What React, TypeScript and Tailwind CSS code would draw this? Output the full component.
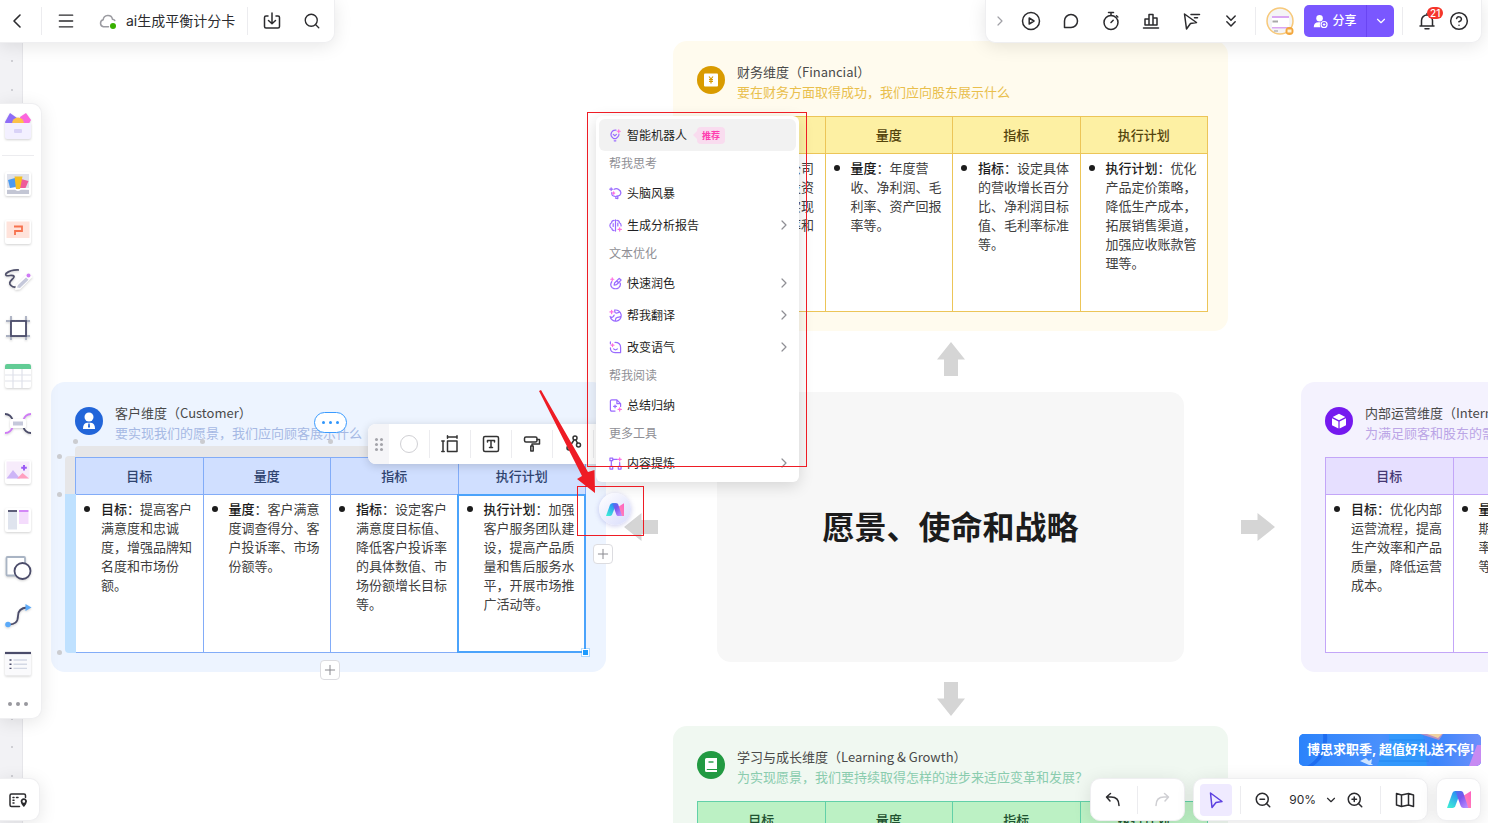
import React from "react";
import {
  ChevronDown,
  ChevronLeft,
  ChevronRight,
  ChevronsDown,
  CircleHelp,
  Menu,
  Plus,
  Search,
  ZoomIn,
  ZoomOut,
} from "lucide-react";

type IconProps = { children: React.ReactNode; className?: string; box?: string };

function Line({ children, className = "size-5", box = "0 0 20 20" }: IconProps) {
  return (
    <svg
      viewBox={box}
      className={className}
      fill="none"
      stroke="currentColor"
      strokeWidth="1.5"
      strokeLinecap="round"
      strokeLinejoin="round"
      aria-hidden="true"
    >
      {children}
    </svg>
  );
}

function AiLogo({ id, className }: { id: string; className: string }) {
  return (
    <svg viewBox="0 0 24 17" className={className} aria-hidden="true">
      <defs>
        <linearGradient id={id + "a"} x1="0" y1="1" x2="0.6" y2="0">
          <stop offset="0" stopColor="#3ff5d4" />
          <stop offset="1" stopColor="#2a8cf5" />
        </linearGradient>
        <linearGradient id={id + "b"} x1="0" y1="0" x2="0.8" y2="1">
          <stop offset="0" stopColor="#3b7df0" />
          <stop offset="0.45" stopColor="#7b55ee" />
          <stop offset="1" stopColor="#b98aff" />
        </linearGradient>
        <linearGradient id={id + "c"} x1="1" y1="0" x2="0" y2="1">
          <stop offset="0" stopColor="#ff5fc0" />
          <stop offset="1" stopColor="#ff8fb4" />
        </linearGradient>
      </defs>
      <path d="M16 5 L24 0 V17 H21 Z" fill={`url(#${id}c)`} />
      <path d="M0 17 L5.4 2 Q6.2 0 8.2 0 H14 L8.2 15.2 Q7.5 17 5.5 17 Z" fill={`url(#${id}a)`} />
      <path d="M8.4 0 H14 Q15.6 0 16.2 1.6 L21.4 17 H16.5 Q14.4 17 13.7 15 L10.6 6.2 Z" fill={`url(#${id}b)`} />
    </svg>
  );
}

/* ---------- canvas cards ---------- */

type Cell = { label: string; text: string };
type Tone = {
  card: string;
  badge: string;
  sub: string;
  border: string;
  head: string;
};

function DimensionCard({
  place,
  tone,
  icon,
  title,
  subtitle,
  cells,
}: {
  place: string;
  tone: Tone;
  icon: React.ReactNode;
  title: string;
  subtitle: string;
  cells: Cell[];
}) {
  return (
    <section className={`absolute w-[555px] rounded-[14px] px-6 pb-[19px] ${place} ${tone.card}`}>
      <div className="flex h-[75px] items-start gap-3 pt-[21px]">
        <span className={`mt-1 grid size-7 shrink-0 place-items-center rounded-full ${tone.badge}`}>{icon}</span>
        <div className="whitespace-nowrap text-[13px] leading-5">
          <h2 className="text-[#4a4a4a]">{title}</h2>
          <p className={tone.sub}>{subtitle}</p>
        </div>
      </div>
      <table className={`w-[511px] table-fixed border-collapse border ${tone.border}`}>
        <thead>
          <tr className="h-[37px]">
            {cells.map((c) => (
              <th key={c.label} className={`border p-0 text-[13px] leading-5 font-medium ${tone.border} ${tone.head}`}>
                {c.label}
              </th>
            ))}
          </tr>
        </thead>
        <tbody>
          <tr className="h-[158px]">
            {cells.map((c) => (
              <td
                key={c.label}
                className={`border bg-white py-1 pr-2 pl-[25px] align-top text-[13px] leading-[19px] text-[#404040] ${tone.border}`}
              >
                <div className="relative">
                  <span className="absolute top-[7px] -left-[17px] size-[6px] rounded-full bg-[#1c1c1c]" />
                  <b className="font-medium text-[#1c1c1c]">{c.label}</b>：{c.text}
                </div>
              </td>
            ))}
          </tr>
        </tbody>
      </table>
    </section>
  );
}

const financial: Cell[] = [
  { label: "目标", text: "提高公司盈利能力与投资收益率、并实现持续的增长率和股东价值。" },
  { label: "量度", text: "年度营收、净利润、毛利率、资产回报率等。" },
  { label: "指标", text: "设定具体的营收增长百分比、净利润目标值、毛利率标准等。" },
  { label: "执行计划", text: "优化产品定价策略，降低生产成本，拓展销售渠道，加强应收账款管理等。" },
];
const customer: Cell[] = [
  { label: "目标", text: "提高客户满意度和忠诚度，增强品牌知名度和市场份额。" },
  { label: "量度", text: "客户满意度调查得分、客户投诉率、市场份额等。" },
  { label: "指标", text: "设定客户满意度目标值、降低客户投诉率的具体数值、市场份额增长目标等。" },
  { label: "执行计划", text: "加强客户服务团队建设，提高产品质量和售后服务水平，开展市场推广活动等。" },
];
const internal: Cell[] = [
  { label: "目标", text: "优化内部运营流程，提高生产效率和产品质量，降低运营成本。" },
  { label: "量度", text: "生产周期、产品合格率、运营效率等。" },
  { label: "指标", text: "设定生产周期缩短目标。" },
  { label: "执行计划", text: "引入精益管理。" },
];
const learning: Cell[] = [
  { label: "目标", text: "提升员工能力。" },
  { label: "量度", text: "员工培训时长。" },
  { label: "指标", text: "设定培训目标。" },
  { label: "执行计划", text: "制定培训计划。" },
];

function BlockArrow({ place, turn }: { place: string; turn: string }) {
  return (
    <svg viewBox="0 0 36 36" className={`absolute size-9 ${place} ${turn}`} aria-hidden="true">
      <path d="M18 1 L32 18.500 H25 V35 H11 V18.500 H4 Z" fill="#d5d5d5" />
    </svg>
  );
}

const marks = [
  "left-[308px] top-[49px]",
  "left-[831px] top-[49px]",
  "left-[1354px] top-[49px]",
  "left-[50px] top-[327px]",
  "left-[573px] top-[327px]",
  "left-[1096px] top-[327px]",
  "left-[308px] top-[576px]",
  "left-[831px] top-[576px]",
  "left-[1354px] top-[576px]",
  "left-[50px] top-[854px]",
  "left-[573px] top-[854px]",
  "left-[1096px] top-[854px]",
];

function Watermark() {
  return (
    <div className="pointer-events-none absolute inset-0 z-30 overflow-hidden" aria-hidden="true">
      {marks.map((m) => (
        <div
          key={m}
          className={`absolute -translate-x-1/2 -translate-y-1/2 -rotate-[47deg] text-center font-['Liberation_Serif','Noto_Sans_CJK_SC',serif] text-[30px] leading-8 whitespace-nowrap text-black/[0.015] ${m}`}
        >
          linfy
          <br />
          10.10.23.22
          <br />
          博思
          <br />
          2025/05/15 16:57
        </div>
      ))}
    </div>
  );
}

/* ---------- AI menu ---------- */

const V = "#9a6bff";
const P = "#ff6fe0";

function Glyph({ children }: { children: React.ReactNode }) {
  return (
    <svg
      viewBox="0 0 14 14"
      className="size-[13px] shrink-0"
      fill="none"
      stroke={V}
      strokeWidth="1.3"
      strokeLinecap="round"
      strokeLinejoin="round"
      aria-hidden="true"
    >
      {children}
    </svg>
  );
}

const star = <path d="M11.500 9.500 V13 M9.800 11.200 H13.300" stroke={P} />;

type Row = { kind: "label"; text: string } | { kind: "item"; text: string; icon: React.ReactNode; more?: boolean; hot?: boolean };

const rows: Row[] = [
  {
    kind: "item",
    text: "智能机器人",
    hot: true,
    icon: (
      <Glyph>
        <path d="M7.500 1.200 A4.600 4.600 0 0 0 3.200 8.600 L5 10.300 H7.600 L9.600 8.400 Q10.800 7.200 10.700 5.500 M5.600 12.700 H7.400" />
        <path d="M4.600 5.800 L6.300 7.300 L8 5.800" />
        <path d="M10.500 0.800 V4 M8.900 2.400 H12.100" stroke={P} />
      </Glyph>
    ),
  },
  { kind: "label", text: "帮我思考" },
  {
    kind: "item",
    text: "头脑风暴",
    icon: (
      <Glyph>
        <path d="M5.500 2.500 Q8 1 10.500 2.800 Q13.500 4.500 12.500 7.500 Q12 9.800 9.500 9.500 Q7.500 9.500 7.300 11 M9.500 9.500 V12.500 L7 12 M3 6 Q2.500 10 6.500 10" />
        <path d="M2.300 0.800 V3.800 M0.800 2.300 H3.800" />
        <path d="M5 5.300 V7.700 M3.800 6.500 H6.200" stroke={P} />
      </Glyph>
    ),
  },
  {
    kind: "item",
    text: "生成分析报告",
    more: true,
    icon: (
      <Glyph>
        <path d="M7 1 V13 M5.500 1.500 Q3 1.500 2.800 4 Q0.700 5 1 7.500 Q1.200 9.500 3 10 Q3.200 12.500 5.500 12.500 M8.500 1.500 Q11 1.500 11.200 4 Q13.300 5 13 7.500 M9.500 4.500 V7.500 M4.500 5 V8" />
        {star}
      </Glyph>
    ),
  },
  { kind: "label", text: "文本优化" },
  {
    kind: "item",
    text: "快速润色",
    more: true,
    icon: (
      <Glyph>
        <path d="M5.500 8.800 L6 6.500 L11 1.500 L13 3.300 L8 8.300 Z M8.500 4.500 L10.500 6.200 M3 5 Q0.500 9 3.500 11.500 Q7 13.800 10.500 11.500 Q13 9 12 6.500" />
        <path d="M3.500 0.800 V4 M1.900 2.400 H5.100" stroke={P} />
      </Glyph>
    ),
  },
  {
    kind: "item",
    text: "帮我翻译",
    more: true,
    icon: (
      <Glyph>
        <path d="M6 1.200 A6 6 0 1 1 1.200 8 M6.500 1.200 Q5.500 4 8 4.500 Q11 4 11.500 3 M1.500 9 Q5 9 5.500 6.500 M7 12.800 Q6.500 9.500 9 9 Q11 9 12.500 8" />
        <path d="M2.800 1.500 V5 M1 3.200 H4.500" stroke={P} />
      </Glyph>
    ),
  },
  {
    kind: "item",
    text: "改变语气",
    more: true,
    icon: (
      <Glyph>
        <path d="M6.500 1.500 Q12.500 1.500 12.500 7 V12.500 H6.500 Q1.500 12.500 1.500 7.500 M5 8.500 Q7 10.500 9 8.500 M1.500 1 V3" />
        <path d="M3.800 3 V6 M2.300 4.500 H5.300" stroke={P} />
      </Glyph>
    ),
  },
  { kind: "label", text: "帮我阅读" },
  {
    kind: "item",
    text: "总结归纳",
    icon: (
      <Glyph>
        <path d="M6.500 13 H3 Q1.500 13 1.500 11.500 V2.500 Q1.500 1 3 1 H8.500 L12.500 5 V8 M8.500 1 V5 H12.500 M6.500 6.500 V9.500 M5 8 H8" />
        {star}
      </Glyph>
    ),
  },
  { kind: "label", text: "更多工具" },
  {
    kind: "item",
    text: "内容提炼",
    more: true,
    icon: (
      <Glyph>
        <path d="M1 1.200 H4 V4 H1 Z M2.500 4 V10 M1 10.200 H4 V13 H1 Z M4 2.500 H9 M11.500 6 V10 M10 10.200 H13 V13 H10 Z" />
        <path d="M11.500 0.800 V4.200 M9.800 2.500 H13.200" stroke={P} />
      </Glyph>
    ),
  },
];

function AiMenu() {
  return (
    <div
      role="menu"
      className="absolute top-[116px] left-[596px] w-[203px] rounded-md bg-white p-[3px] text-xs shadow-[0_4px_16px_rgba(0,0,0,0.14)]"
    >
      {rows.map((r) =>
        r.kind === "label" ? (
          <div key={r.text} className="flex h-[26px] items-center px-[10px] pb-[2px] text-[#8f8f95]">
            {r.text}
          </div>
        ) : (
          <button
            key={r.text}
            role="menuitem"
            className={`flex h-8 w-full items-center gap-[5px] rounded-md pr-1 pl-[10px] text-[#1f1f24] ${r.hot ? "bg-[#f2f2f2]" : ""}`}
          >
            {r.icon}
            <span>{r.text}</span>
            {r.hot && (
              <span className="ml-px flex items-center">
                <span className="size-0 border-y-4 border-r-4 border-y-transparent border-r-[#f9dcef]" />
                <span className="rounded bg-[#f9dcef] px-[5px] text-[9px] leading-[17px] font-bold text-[#ff3db0]">推荐</span>
              </span>
            )}
            {r.more && <ChevronRight className="ml-auto size-4 text-[#8f8f95]" strokeWidth={1.8} />}
          </button>
        ),
      )}
    </div>
  );
}

/* ---------- selection tools ---------- */

function SelectionToolbar() {
  const tools: [string, React.ReactNode][] = [
    ["填充颜色", <span className="size-[18px] rounded-full border border-[#d0d0d4] bg-white" />],
    [
      "单元格尺寸",
      <Line>
        <path d="M7.500 7 H17 V17.500 H7.500 Z M7.500 3 H17 M7.500 1.800 V4.200 M17 1.800 V4.200 M3 7 V17.500 M1.800 7 H4.200 M1.800 17.500 H4.200" />
      </Line>,
    ],
    [
      "文本",
      <Line>
        <rect x="2.500" y="2.500" width="15" height="15" rx="1.500" />
        <path d="M6.500 8 V6.500 H13.500 V8 M10 6.500 V13.500 M8.500 13.500 H11.500" />
      </Line>,
    ],
    [
      "格式刷",
      <Line>
        <rect x="2.500" y="3" width="12.500" height="5" rx="1.500" />
        <path d="M15 5.500 H17.500 V10 H10 V12 M8.800 12 H11.200 V17 H8.800 Z" />
      </Line>,
    ],
    [
      "关联",
      <Line>
        <circle cx="12" cy="4" r="2" />
        <circle cx="6" cy="14" r="2" />
        <circle cx="15.500" cy="11" r="2" />
        <path d="M11 6 L7 12 M12.800 5.800 L14.500 9.200" />
      </Line>,
    ],
    ["更多", null],
  ];
  return (
    <div className="absolute top-[424px] left-[368px] flex h-10 overflow-hidden rounded-lg bg-white text-[#333] shadow-[0_2px_10px_rgba(0,0,0,0.16)]">
      <div className="grid w-[21px] place-items-center bg-[#f5f5f8]">
        <div className="grid w-2 grid-cols-2 gap-x-[2px] gap-y-[2px]">
          {[0, 1, 2, 3, 4, 5].map((i) => (
            <span key={i} className="size-[3px] rounded-full bg-[#a4a4aa]" />
          ))}
        </div>
      </div>
      {tools.map(([name, icon]) => (
        <button key={name} aria-label={name} className="my-[6px] grid w-[41px] place-items-center border-r border-[#ececef]">
          {icon}
        </button>
      ))}
    </div>
  );
}

function AddButton({ place, label }: { place: string; label: string }) {
  return (
    <button
      aria-label={label}
      className={`absolute grid size-5 place-items-center rounded border border-[#dcdce0] bg-white text-[#8a8a90] ${place}`}
    >
      <Plus className="size-4" strokeWidth={1.5} />
    </button>
  );
}

const handles = [
  "left-[73px] top-[439px]",
  "left-[200px] top-[439px]",
  "left-[328px] top-[439px]",
  "left-[57px] top-[454px]",
  "left-[57px] top-[492px]",
  "left-[57px] top-[650px]",
];

function Canvas() {
  return (
    <main className="absolute inset-0 overflow-hidden">
      <div className="absolute inset-y-0 left-0 flex w-[23px] flex-col items-center justify-between border-r border-[#e6e6ea] bg-[#f2f2f5] pt-[3px] pb-[17px] pl-[2px]">
        {Array.from({ length: 29 }, (_, i) => (
          <span key={i} className="size-[2px] bg-[#cfcfd4]" />
        ))}
      </div>

      <DimensionCard
        place="left-[673px] top-[41px]"
        tone={{
          card: "bg-[#fffbee]",
          badge: "bg-[#d99b00]",
          sub: "text-[#e9bf4d]",
          border: "border-[#ecc558]",
          head: "bg-[#fdf0a3] text-[#54440c]",
        }}
        icon={
          <svg viewBox="0 0 14 14" className="size-[14px]" aria-hidden="true">
            <rect x="0" y="0.500" width="14" height="13" rx="1" fill="#fff" />
            <path d="M5 3.500 L7 6 L9 3.500 M7 6 V10.500 M5 6.600 H9 M5 8.500 H9" stroke="#d99b00" strokeWidth="1.200" fill="none" />
          </svg>
        }
        title="财务维度（Financial）"
        subtitle="要在财务方面取得成功，我们应向股东展示什么"
        cells={financial}
      />
      <DimensionCard
        place="left-[51px] top-[382px]"
        tone={{
          card: "bg-[#edf4ff]",
          badge: "bg-[#2265d9]",
          sub: "text-[#a6b9e4]",
          border: "border-[#82acf8]",
          head: "bg-[#d0dfff] text-[#2f4470]",
        }}
        icon={
          <svg viewBox="0 0 14 18" className="h-[18px] w-[14px]" aria-hidden="true">
            <circle cx="7" cy="5" r="4.500" fill="#fff" />
            <path d="M1 17 Q1 11 5 10.800 H9 Q13 11 13 17 Z" fill="#fff" />
            <path d="M6.300 11.500 H7.700 L8 15 L7 16 L6 15 Z" fill="#2265d9" />
          </svg>
        }
        title="客户维度（Customer）"
        subtitle="要实现我们的愿景，我们应向顾客展示什么"
        cells={customer}
      />
      <DimensionCard
        place="left-[1301px] top-[382px]"
        tone={{
          card: "bg-[#f4f2fe]",
          badge: "bg-[#7519ef]",
          sub: "text-[#bba5e6]",
          border: "border-[#c3a6f8]",
          head: "bg-[#e6dfff] text-[#453873]",
        }}
        icon={
          <svg viewBox="0 0 16 16" className="size-4" aria-hidden="true">
            <path d="M8 0.800 L14.300 4 L8 7.200 L1.700 4 Z M1 5.200 L7.400 8.400 V15.400 L1 12.300 Z M15 5.200 L8.600 8.400 V15.400 L15 12.300 Z" fill="#fff" />
          </svg>
        }
        title="内部运营维度（Internal Process）"
        subtitle="为满足顾客和股东的需求，我们应该擅长什么"
        cells={internal}
      />
      <DimensionCard
        place="left-[673px] top-[726px]"
        tone={{
          card: "bg-[#f0f8f1]",
          badge: "bg-[#229a42]",
          sub: "text-[#8accae]",
          border: "border-[#62d0a8]",
          head: "bg-[#bcf1c4] text-[#1f5231]",
        }}
        icon={
          <svg viewBox="0 0 14 16" className="h-4 w-[14px]" aria-hidden="true">
            <path d="M2.500 1 H13 V12 H2.800 V13 H13 V15 H2.500 Q1 15 1 13.500 V2.500 Q1 1 2.500 1 Z" fill="#fff" />
            <path d="M4.500 5 H9.500" stroke="#229a42" strokeWidth="1.400" />
          </svg>
        }
        title="学习与成长维度（Learning & Growth）"
        subtitle="为实现愿景，我们要持续取得怎样的进步来适应变革和发展？"
        cells={learning}
      />

      <section className="absolute top-[392px] left-[717px] grid h-[270px] w-[467px] place-items-center rounded-[14px] bg-[#f7f7f7] pb-1">
        <h1 className="text-[32px] leading-10 font-bold text-[#1c1c1c]">愿景、使命和战略</h1>
      </section>

      <BlockArrow place="left-[933px] top-[341px]" turn="rotate-0" />
      <BlockArrow place="left-[933px] top-[681px]" turn="rotate-180" />
      <BlockArrow place="left-[1240px] top-[509px]" turn="rotate-90" />
      <BlockArrow place="left-[623px] top-[509px]" turn="-rotate-90" />

      {/* table selection */}
      <div className="absolute top-[446px] left-[75px] h-[11px] w-[511px] rounded-t bg-[#e6e6e8]" />
      <div className="absolute top-[456px] left-[65px] h-[38px] w-[10px] rounded-tl bg-[#e6e6e8]" />
      <div className="absolute top-[494px] left-[65px] h-[159px] w-[11px] rounded-bl bg-[#bfe1ff]" />
      {handles.map((h) => (
        <span key={h} className={`absolute size-[5px] rounded-full bg-[#cbccd0] ${h}`} />
      ))}
      <div className="absolute top-[494px] left-[457px] h-[159px] w-[129px] border-2 border-[#4ba3fb]" />
      <span className="absolute top-[649px] left-[582px] size-[7px] border border-white bg-[#1d9bff] outline outline-[#1d9bff]/30" />
      <AddButton place="left-[320px] top-[660px]" label="添加行" />
      <AddButton place="left-[593px] top-[544px]" label="添加列" />
      <button
        aria-label="更多选项"
        className="absolute top-[412px] left-[314px] flex h-[21px] w-[33px] items-center justify-center gap-1 rounded-full border border-[#3a9bff] bg-white"
      >
        <span className="size-[3px] rounded-full bg-[#2f95fb]" />
        <span className="size-[3px] rounded-full bg-[#2f95fb]" />
        <span className="size-[3px] rounded-full bg-[#2f95fb]" />
      </button>

      <SelectionToolbar />
      <AiMenu />
      <button
        aria-label="AI 助手"
        className="absolute top-[493px] left-[599px] grid size-8 place-items-center rounded-full bg-linear-to-br from-white to-[#d9dcfb] shadow-[0_1px_5px_rgba(90,90,200,0.3)]"
      >
        <AiLogo id="chip" className="h-[13px] w-[18px]" />
      </button>

      {/* annotations */}
      <div className="absolute top-[112px] left-[587px] h-[355px] w-[220px] border border-[#ee1c25]" />
      <div className="absolute top-[486px] left-[577px] h-[50px] w-[67px] border border-[#ee1c25]" />
      <svg viewBox="0 0 60 106" className="absolute top-[388px] left-[537px] h-[106px] w-[60px]" aria-hidden="true">
        <path d="M2 3 L4 2 L51 84 L57.500 82 L58 105 L40 91 L45 88 Z" fill="#ee1c25" />
      </svg>
    </main>
  );
}

/* ---------- chrome ---------- */

const panel = "pointer-events-auto border border-[#efeff1] bg-white shadow-[0_3px_18px_rgba(0,0,0,0.1)]";
const iconButton = "grid h-8 place-items-center";

function TopBar() {
  return (
    <header className="flex items-start justify-between pr-[6px] text-[#2b2b2e]">
      <div className={`flex h-[43px] items-center rounded-br-[10px] border-t-0 border-l-0 pr-[6px] ${panel}`}>
        <button aria-label="返回" className={`${iconButton} w-[34px]`}>
          <ChevronLeft className="size-6" strokeWidth={1.6} />
        </button>
        <span className="ml-[7px] h-7 w-px bg-[#ececef]" />
        <button aria-label="菜单" className={`${iconButton} ml-2 w-8`}>
          <Menu className="size-5" strokeWidth={1.6} />
        </button>
        <span className="relative ml-4 h-5 w-5 text-[#9b9ba1]">
          <Line>
            <path d="M16.800 9.500 A3.400 3.400 0 0 0 14.500 8.300 A4.700 4.700 0 0 0 5.200 8.800 A3.600 3.600 0 0 0 5.400 15.800 H10.500" />
          </Line>
          <span className="absolute right-[2px] bottom-[2px] size-[6px] rounded-full bg-[#38b000]" />
        </span>
        <span className="ml-2 text-sm whitespace-nowrap">ai生成平衡计分卡</span>
        <span className="ml-3 h-7 w-px bg-[#ececef]" />
        <button aria-label="下载" className={`${iconButton} ml-2 w-8`}>
          <Line>
            <path d="M6 5 H4 Q2.500 5 2.500 6.500 V15.500 Q2.500 17 4 17 H16 Q17.500 17 17.500 15.500 V6.500 Q17.500 5 16 5 H14 M10 2 V12.500 M6.500 9.500 L10 12.700 L13.500 9.500" />
          </Line>
        </button>
        <button aria-label="搜索" className={`${iconButton} ml-2 w-8`}>
          <Search className="size-[18px]" strokeWidth={1.8} />
        </button>
      </div>

      <div className={`flex h-[43px] items-center rounded-b-[10px] border-t-0 pr-[6px] pl-[3px] ${panel}`}>
        <button aria-label="展开" className={`${iconButton} w-[22px] text-[#a0a0a6]`}>
          <ChevronRight className="size-4" strokeWidth={1.8} />
        </button>
        <button aria-label="演示" className={`${iconButton} w-10`}>
          <Line>
            <circle cx="10" cy="10" r="8.500" />
            <path d="M8.200 7 L13 10 L8.200 13 Z" />
          </Line>
        </button>
        <button aria-label="评论" className={`${iconButton} w-10`}>
          <Line>
            <path d="M3.500 16.500 V10 A6.500 6.500 0 1 1 10 16.500 Z" />
          </Line>
        </button>
        <button aria-label="计时器" className={`${iconButton} w-10`}>
          <Line>
            <circle cx="10" cy="11.500" r="7" />
            <path d="M10 4.500 V1.500 M7.500 1.500 H12.500 M10 11.500 L12.200 9.300 M15.500 4.800 L16.800 6" />
          </Line>
        </button>
        <button aria-label="投票" className={`${iconButton} w-10`}>
          <Line>
            <path d="M2.500 17 H17.500 M4 14 V8 H8 M8 14 V3.500 H12 V14 M12 7 H16 V14 M4 14 H16" />
          </Line>
        </button>
        <button aria-label="跟随" className={`${iconButton} w-10`}>
          <Line>
            <path d="M3.500 3 L15.500 11.500 L9.500 12.500 L5.500 18 Z M10 3.500 H18.500 M13.500 6.800 H16.500" />
          </Line>
        </button>
        <button aria-label="更多工具" className={`${iconButton} w-10`}>
          <ChevronsDown className="size-5" strokeWidth={1.8} />
        </button>
        <span className="ml-1 h-7 w-px bg-[#ececef]" />
        <button aria-label="账户" className="ml-[10px] size-7">
          <svg viewBox="0 0 28 28" className="size-7" aria-hidden="true">
            <circle cx="14" cy="14" r="13" fill="#f4f4f6" stroke="#f7c97a" strokeWidth="1.500" />
            <path d="M6 9 H23 V11 H6 Z M6 20 H23 V21.500 H6 Z" fill="#dba6f2" />
            <path d="M6 11 H23 V20 H6 Z" fill="#fff" />
            <path d="M6.500 14.500 H12" stroke="#a8a8a8" strokeWidth="2" />
            <path d="M8 24 H12" stroke="#999" strokeWidth="1" />
            <circle cx="23.500" cy="24" r="4" fill="#f3a63c" />
            <path d="M21.500 22.500 H25.500 V25.500 H21.500 Z" fill="#fff3d6" />
          </svg>
        </button>
        <div className="ml-[10px] flex h-8 overflow-hidden rounded-[5px] bg-[#7a57ff] text-white">
          <button className="flex w-[63px] items-center justify-center gap-1 border-r border-[#6a45f2] text-xs font-medium">
            <svg viewBox="0 0 16 16" className="size-[15px]" aria-hidden="true">
              <circle cx="7" cy="4.500" r="3.500" fill="#fff" />
              <path d="M0.800 14 Q0.800 8.800 6 8.800 H8 Q6.500 11.500 8 14 Z" fill="#fff" />
              <circle cx="11.800" cy="11.200" r="3.200" fill="none" stroke="#fff" strokeWidth="1.300" />
              <path d="M11.800 9.800 V12.600 M10.400 11.200 H13.200" stroke="#fff" strokeWidth="1.100" />
            </svg>
            分享
          </button>
          <button aria-label="分享选项" className="grid w-[27px] place-items-center">
            <ChevronDown className="size-[14px]" strokeWidth={2} />
          </button>
        </div>
        <span className="ml-2 h-7 w-px bg-[#ececef]" />
        <button aria-label="通知" className={`${iconButton} relative ml-2 w-8`}>
          <Line>
            <path d="M3 15 H17 M4.500 15 V9.500 A5.500 5.500 0 0 1 15.500 9.500 V15 M10 2.500 V4 M8 17.800 H12" />
          </Line>
          <span className="absolute top-[2px] left-4 h-3 rounded-full bg-[#f5352b] px-[3px] text-[10px] leading-3 font-medium text-white">21</span>
        </button>
        <button aria-label="帮助" className={`${iconButton} w-8`}>
          <CircleHelp className="size-5" strokeWidth={1.8} />
        </button>
      </div>
    </header>
  );
}

function Tile({ children }: { children: React.ReactNode }) {
  return (
    <svg viewBox="0 0 32 32" className="size-8 drop-shadow-[0_1px_1px_rgba(0,0,0,0.18)]" aria-hidden="true">
      {children}
    </svg>
  );
}

const sideTools: [string, React.ReactNode][] = [
  [
    "模板",
    <Tile>
      <rect x="3" y="4" width="26" height="24" rx="2" fill="#fff" />
      <rect x="5" y="6" width="22" height="14" fill="#dfe1ea" />
      <path d="M5 21.500 H27 V26 H5 Z" fill="#c3c6d4" />
      <path d="M5 21 L13 20.500 Q16 24 19 20.500 L27 21" fill="none" stroke="#fff" strokeWidth="1.600" />
      <path d="M6 12 L13 10 L15 18.500 L8 20 Z" fill="#4a9af0" />
      <path d="M19 11 L26.500 13 L23.500 20 L16 20 Z" fill="#ee5c9a" />
      <path d="M12.500 8.500 H20.500 L18 21 L14 21 Z" fill="#f5c023" />
    </Tile>,
  ],
  [
    "演示文稿",
    <Tile>
      <rect x="3" y="4" width="26" height="24" rx="2" fill="#fff" />
      <rect x="4.500" y="5.500" width="23" height="16.500" fill="#ffe3db" />
      <path d="M12 10.500 H20 V15 H13 V19" fill="none" stroke="#f7724e" strokeWidth="1.800" />
    </Tile>,
  ],
  [
    "画笔",
    <Tile>
      <path d="M17 6 Q9 5.500 4 9.500 Q2.500 12.500 8 11.500 Q15 11 10 15.500 Q6 19 9 21.500 Q11 23.500 14 23" fill="none" stroke="#50516b" strokeWidth="1.700" />
      <path d="M13 26 L14 21 L26 9 L30.500 13 L18 25.500 Z" fill="#fff" />
      <path d="M15 23.500 L16 21 L24 13.500 L26.500 15.800 L18 24 Z" fill="#c5c8da" />
      <circle cx="26.500" cy="11.500" r="2" fill="#cf7bf5" />
    </Tile>,
  ],
  [
    "画框",
    <Tile>
      <path d="M4 9 H28 M4 24 H28 M9 4 V29 M24 4 V29" stroke="#a9afc0" strokeWidth="1.800" strokeDasharray="4 1" />
      <rect x="9" y="9" width="15" height="15" fill="#fff" stroke="#4b4c6a" strokeWidth="1.800" />
    </Tile>,
  ],
  [
    "表格",
    <Tile>
      <rect x="3" y="4" width="26" height="24" rx="2" fill="#fff" />
      <path d="M3 9 V6 Q3 4 5 4 H27 Q29 4 29 6 V9 Z" fill="#62cc95" />
      <path d="M3 15 H29 M3 21 H29 M11 9 V28 M20 9 V28" stroke="#dfe2ea" strokeWidth="1.200" />
    </Tile>,
  ],
  [
    "思维导图",
    <Tile>
      <path d="M3 6 Q9 6 11 13 M29 25 Q23 25 21 18" fill="none" stroke="#4b4c6a" strokeWidth="1.800" />
      <path d="M29 6 Q23 6 21 13 M3 25 Q9 25 11 18" fill="none" stroke="#cf7bf5" strokeWidth="1.800" />
      <rect x="8" y="11" width="16" height="9" rx="1.500" fill="#fff" />
      <rect x="11" y="13.500" width="10" height="4" fill="#c5c8da" />
    </Tile>,
  ],
  [
    "图片",
    <Tile>
      <rect x="3" y="4" width="26" height="24" rx="2" fill="#fff" />
      <rect x="4.500" y="5.500" width="23" height="17" fill="#f7ecfb" />
      <path d="M4.500 22.500 L11 14 L18 22.500 Z" fill="#cdb5f7" />
      <path d="M15 22.500 L20.500 17 L27 22.500 Z" fill="#ff9fc0" />
      <path d="M22 9 V14.500 M19.200 11.800 H24.800" stroke="#9c5cf5" strokeWidth="2" />
    </Tile>,
  ],
  [
    "看板",
    <Tile>
      <rect x="3" y="4" width="26" height="24" rx="2" fill="#fff" />
      <path d="M6 8 H15 V25.500 H6 Z" fill="#dfe4ee" />
      <path d="M17 8 H26.500 V20 H17 Z" fill="#f4dcfc" />
      <path d="M6 7 H15" stroke="#4b4c6a" strokeWidth="1.800" />
      <path d="M17 7 H26.500" stroke="#cf7bf5" strokeWidth="1.800" />
    </Tile>,
  ],
  [
    "形状",
    <Tile>
      <rect x="4.500" y="5" width="18.500" height="18.500" rx="1" fill="#fff" stroke="#a9b4c4" strokeWidth="1.800" />
      <circle cx="20.500" cy="19" r="8" fill="#fff" stroke="#4b4c6a" strokeWidth="1.800" />
    </Tile>,
  ],
  [
    "连线",
    <Tile>
      <path d="M6 24.500 Q16 25 16 16 Q16 8 25 7.500" fill="none" stroke="#4b4c6a" strokeWidth="1.800" />
      <circle cx="6" cy="24.500" r="2.800" fill="#5baaf9" />
      <path d="M23.500 4 L29.500 7.500 L23.500 11 Z" fill="#5baaf9" />
    </Tile>,
  ],
  [
    "列表",
    <Tile>
      <rect x="3" y="4.500" width="26" height="23" rx="1.500" fill="#fafafc" />
      <path d="M3 5 H29" stroke="#4b4c6a" strokeWidth="2.200" />
      <path d="M11.500 12 H25 M11.500 16.200 H25 M11.500 20.400 H25" stroke="#d3d8e4" strokeWidth="1.400" />
      <path d="M7.500 12 H9.500 M7.500 16.200 H9.500 M7.500 20.400 H9.500" stroke="#4b4c6a" strokeWidth="1.400" />
    </Tile>,
  ],
];

function SideBar() {
  return (
    <nav
      aria-label="工具栏"
      className={`mt-[60px] flex w-[42px] flex-col items-start rounded-r-[10px] border-l-0 pt-[7px] pb-[2px] pl-[2px] ${panel}`}
    >
      <button aria-label="素材库" className="size-8">
        <Tile>
          <path d="M3 11 L8 2 L15 7 L12 14 H4 Z" fill="#8f6df7" />
          <path d="M18 6 L24 2 L29 9 L26 14 H19 Z" fill="#fb65dd" />
          <circle cx="16" cy="12.500" r="6" fill="#fcc14a" />
          <path d="M3 12 H29 V26 Q29 28 27 28 H5 Q3 28 3 26 Z" fill="#f3f0ff" />
          <rect x="12" y="18" width="8" height="4" rx="1" fill="#d9d2f7" />
        </Tile>
      </button>
      <span className="my-3 h-px w-8 bg-[#ececef]" />
      <div className="flex flex-col gap-4">
        {sideTools.map(([name, icon]) => (
          <button key={name} aria-label={name} className="size-8">
            {icon}
          </button>
        ))}
      </div>
      <button aria-label="更多" className="mt-3 flex h-6 w-8 items-center justify-center gap-1">
        <span className="size-1 rounded-full bg-[#98989e]" />
        <span className="size-1 rounded-full bg-[#98989e]" />
        <span className="size-1 rounded-full bg-[#98989e]" />
      </button>
    </nav>
  );
}

function BottomBar() {
  return (
    <footer className="mt-auto flex items-end justify-between pr-[7px] pb-[2px] text-[#2b2b2e]">
      <button aria-label="导航" className={`grid h-[43px] w-10 place-items-center rounded-r-[10px] border-l-0 pr-1 ${panel}`}>
        <Line>
          <path d="M17.500 7.500 V5.500 Q17.500 4 16 4 H3.500 Q2 4 2 5.500 V15 Q2 16.500 3.500 16.500 H11.500 M5 7.500 H6 M5 10.300 H6 M5 13 H6 M8.500 7.500 H10" />
          <path d="M15.800 9 A2.400 2.400 0 0 1 18.200 11.500 Q18 13.500 15.800 16 Q13.600 13.500 13.400 11.500 A2.400 2.400 0 0 1 15.800 9 Z" fill="currentColor" />
          <circle cx="15.800" cy="11.400" r="0.600" fill="#fff" stroke="#fff" />
        </Line>
      </button>

      <div className="flex flex-col items-end gap-3">
        <a
          href="#promo"
          className="pointer-events-auto relative flex h-8 w-[182px] items-center overflow-hidden rounded-[5px] bg-[#2f80f7] pl-2 text-[13px] font-bold whitespace-nowrap text-white"
        >
          <svg viewBox="0 0 182 32" className="absolute inset-0 h-8 w-[182px]" aria-hidden="true">
            <defs>
              <linearGradient id="promoBase" x1="0" y1="0" x2="1" y2="0">
                <stop offset="0" stopColor="#2b83fb" />
                <stop offset="0.45" stopColor="#4a90fc" />
                <stop offset="0.75" stopColor="#3a86fb" />
                <stop offset="1" stopColor="#6d8ffb" />
              </linearGradient>
            </defs>
            <path d="M0 0 H182 V32 H0 Z" fill="url(#promoBase)" />
            <path d="M8 32 Q26 22 24 0 H28 Q30 22 14 32 Z" fill="#1f6df0" />
            <path d="M90 0 H124 L128 32 H78 L82 22 H86 V12 H90 Z" fill="#2f9bfb" opacity="0.8" />
            <path d="M90 6 H126 M86 16 H128 M80 27 H130" stroke="#2386f2" strokeWidth="1" />
            <path d="M61 27 L67 24 L74 31 H70 Z M68 28 L73 25 L72 31 Z" fill="#cfe4ff" />
            <path d="M121 0 H144 L140 6 Z" fill="#b48fc4" />
            <path d="M128 0 H143 L139 4 Z" fill="#f0d2a0" />
            <path d="M170 32 L178 11 H182 V32 Z" fill="#c78af2" />
          </svg>
          <span className="relative">博思求职季, 超值好礼送不停!</span>
        </a>

        <div className="flex gap-2">
          <div className={`flex h-[43px] w-[95px] items-center justify-between rounded-[10px] px-[6px] ${panel}`}>
            <button aria-label="撤销" className={`${iconButton} w-8`}>
              <Line>
                <path d="M7.500 3.500 L3.500 7 L7 11 M3.700 7 H8 Q16 7 16 15.500" />
              </Line>
            </button>
            <span className="h-7 w-px bg-[#ececef]" />
            <button aria-label="重做" className={`${iconButton} w-8 text-[#cfcfd3]`}>
              <Line>
                <path d="M12.500 3.500 L16.500 7 L13 11 M16.300 7 H12 Q4 7 4 15.500" />
              </Line>
            </button>
          </div>

          <div className={`flex h-[43px] items-center rounded-[10px] px-[6px] ${panel}`}>
            <button aria-label="选择" className={`${iconButton} w-8 rounded bg-[#efeaff] text-[#5b3fe0]`}>
              <Line>
                <path d="M4.500 3 L16 11.500 L10 12.500 L6 17.500 Z" />
              </Line>
            </button>
            <span className="ml-2 h-7 w-px bg-[#ececef]" />
            <button aria-label="缩小" className={`${iconButton} ml-[6px] w-8`}>
              <ZoomOut className="size-[18px]" strokeWidth={2} />
            </button>
            <button className="ml-[10px] flex h-8 items-center gap-2 text-xs">
              90%
              <ChevronDown className="size-[14px]" strokeWidth={2} />
            </button>
            <button aria-label="放大" className={`${iconButton} ml-px w-8`}>
              <ZoomIn className="size-[18px]" strokeWidth={2} />
            </button>
            <span className="ml-[9px] h-7 w-px bg-[#ececef]" />
            <button aria-label="小地图" className={`${iconButton} ml-2 w-8`}>
              <Line>
                <path d="M1.500 3.500 L6.500 5 L13.500 3.500 L18.500 5 V16.500 L13.500 15 L6.500 16.500 L1.500 15 Z M6.500 5 V16.500 M13.500 3.500 V15" />
              </Line>
            </button>
          </div>

          <button aria-label="AI" className={`grid h-[43px] w-[45px] place-items-center rounded-[10px] ${panel}`}>
            <AiLogo id="corner" className="h-[17px] w-6" />
          </button>
        </div>
      </div>
    </footer>
  );
}

export default function App() {
  return (
    <div className="relative h-screen overflow-hidden bg-white font-[Inter,'Noto_Sans_CJK_SC',sans-serif]">
      <div className="font-['Noto_Sans_CJK_SC',sans-serif]">
        <Canvas />
      </div>
      <div className="pointer-events-none relative z-10 flex h-full flex-col">
        <TopBar />
        <SideBar />
        <BottomBar />
      </div>
      <Watermark />
    </div>
  );
}
